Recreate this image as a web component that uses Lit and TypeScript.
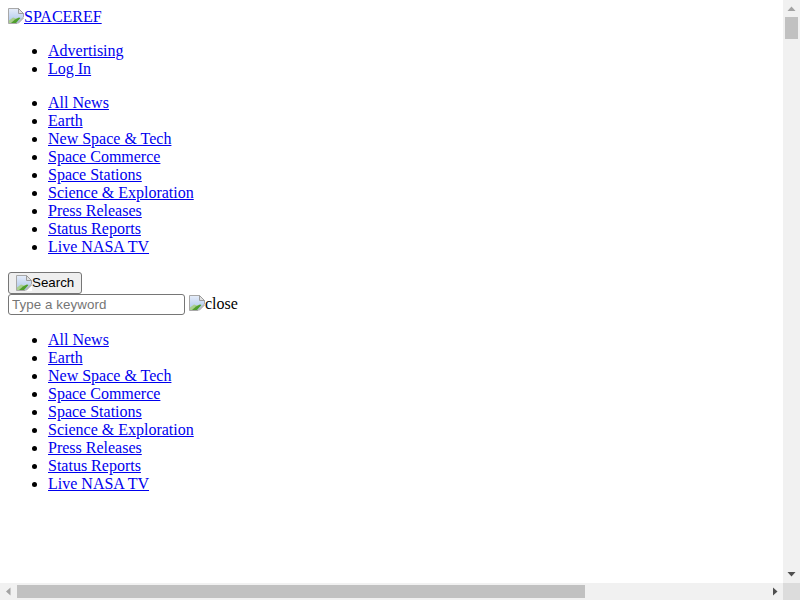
import { LitElement, html, css, svg } from "lit";
import { customElement } from "lit/decorators.js";

const NAV = [
  "All News",
  "Earth",
  "New Space & Tech",
  "Space Commerce",
  "Space Stations",
  "Science & Exploration",
  "Press Releases",
  "Status Reports",
  "Live NASA TV",
];

const broken = svg`<svg class="broken" width="16" height="16" viewBox="0 0 16 16">
  <defs>
    <linearGradient id="sky" x1="0" y1="0" x2="0" y2="1">
      <stop offset="0" stop-color="#e6edf9"/>
      <stop offset="1" stop-color="#a9c4ec"/>
    </linearGradient>
  </defs>
  <path d="M0.5 0.5H10.5L15.5 5.5V9L9 15.5H0.5Z" fill="url(#sky)" stroke="#a8a8a8"/>
  <path d="M10.5 0.5V5.5H15.5Z" fill="#e0e0e0" stroke="#9c9c9c"/>
  <path d="M1 15V12.5L5 9.5L8 10.5L11 9.5L8 15Z" fill="#a9cf8f"/>
  <path d="M3 15L7 11.5L11 9.5L12.5 10L8 15Z" fill="#4f9e2c"/>
  <path d="M9.5 16L16 9.5V16Z" fill="#fff"/>
  <path d="M10 15.5L15.5 10" stroke="#9c9c9c" fill="none"/>
</svg>`;

@customElement("app-root")
export class AppRoot extends LitElement {
  static styles = css`
    :host {
      display: grid;
      grid-template-columns: 783px 17px;
      grid-template-rows: 583px 17px;
      width: 800px;
      height: 600px;
      overflow: hidden;
      background: #fff;
      color: #000;
      font-family: "Liberation Serif", "Times New Roman", serif;
      font-size: 16px;
      line-height: 18px;
    }
    .page {
      padding: 8px;
      overflow: hidden;
      box-sizing: border-box;
    }
    a {
      color: #0000ee;
      text-decoration: underline;
    }
    ul {
      margin: 16px 0;
      padding: 0 0 0 40px;
      list-style: disc;
    }
    .broken {
      display: inline-block;
      vertical-align: -2px;
    }
    .search-btn {
      display: flex;
      align-items: center;
      box-sizing: border-box;
      width: 74px;
      height: 22px;
      margin: 0;
      padding: 0 6px 0 7px;
      border: 1px solid #767676;
      border-radius: 3px;
      background: #efefef;
      color: #000;
      font: 13.3333px / 15px "Liberation Sans", Arial, sans-serif;
      white-space: nowrap;
    }
    .search-btn span {
      margin-bottom: 2px;
    }
    .search-row {
      display: flex;
      align-items: flex-start;
      height: 22px;
      margin-bottom: 15px;
    }
    .search-row input {
      box-sizing: border-box;
      width: 177px;
      height: 21px;
      margin: 0 4px 0 0;
      padding: 1px 2px 1px 3px;
      border: 1px solid #767676;
      border-radius: 3px;
      background: #fff;
      font: 13.3333px "Liberation Sans", Arial, sans-serif;
      letter-spacing: 0.08px;
    }
    .search-row input::placeholder {
      color: #757575;
      opacity: 1;
    }
    .search-row .broken,
    .search-row span {
      margin-top: 1px;
    }
    .list-second {
      margin-top: 0;
    }
    .vbar,
    .hbar {
      background: #f1f1f1;
      display: flex;
      align-items: center;
      justify-content: space-between;
    }
    .vbar {
      flex-direction: column;
    }
    .arrow {
      flex: none;
      width: 17px;
      height: 17px;
      display: block;
    }
    .vthumb {
      flex: none;
      width: 13px;
      height: 22px;
      background: #c1c1c1;
    }
    .vtrack {
      flex: 1;
      display: flex;
      justify-content: center;
      width: 100%;
    }
    .htrack {
      flex: 1;
      display: flex;
      align-items: center;
      height: 100%;
    }
    .hthumb {
      width: 568px;
      height: 13px;
      background: #c1c1c1;
    }
    .corner {
      background: #dcdcdc;
    }
  `;

  private list(cls = "") {
    return html`<ul class=${cls}>
      ${NAV.map((n) => html`<li><a href="#">${n}</a></li>`)}
    </ul>`;
  }

  render() {
    return html`
      <div class="page">
        <div><a href="#">${broken}SPACEREF</a></div>
        <ul>
          <li><a href="#">Advertising</a></li>
          <li><a href="#">Log In</a></li>
        </ul>
        ${this.list()}
        <button class="search-btn" type="button">${broken}<span>Search</span></button>
        <div class="search-row">
          <input type="text" placeholder="Type a keyword" />
          ${broken}<span>close</span>
        </div>
        ${this.list("list-second")}
      </div>
      <div class="vbar">
        <svg class="arrow" viewBox="0 0 17 17"><path d="M8.5 6.5L12.5 11H4.5Z" fill="#a3a3a3"/></svg>
        <div class="vtrack"><div class="vthumb"></div></div>
        <svg class="arrow" viewBox="0 0 17 17"><path d="M4.5 6H12.5L8.5 10.5Z" fill="#505050"/></svg>
      </div>
      <div class="hbar">
        <svg class="arrow" viewBox="0 0 17 17"><path d="M6 8.5L10.5 4.5V12.5Z" fill="#a3a3a3"/></svg>
        <div class="htrack"><div class="hthumb"></div></div>
        <svg class="arrow" viewBox="0 0 17 17"><path d="M7 4.5L11.5 8.5L7 12.5Z" fill="#505050"/></svg>
      </div>
      <div class="corner"></div>
    `;
  }
}
